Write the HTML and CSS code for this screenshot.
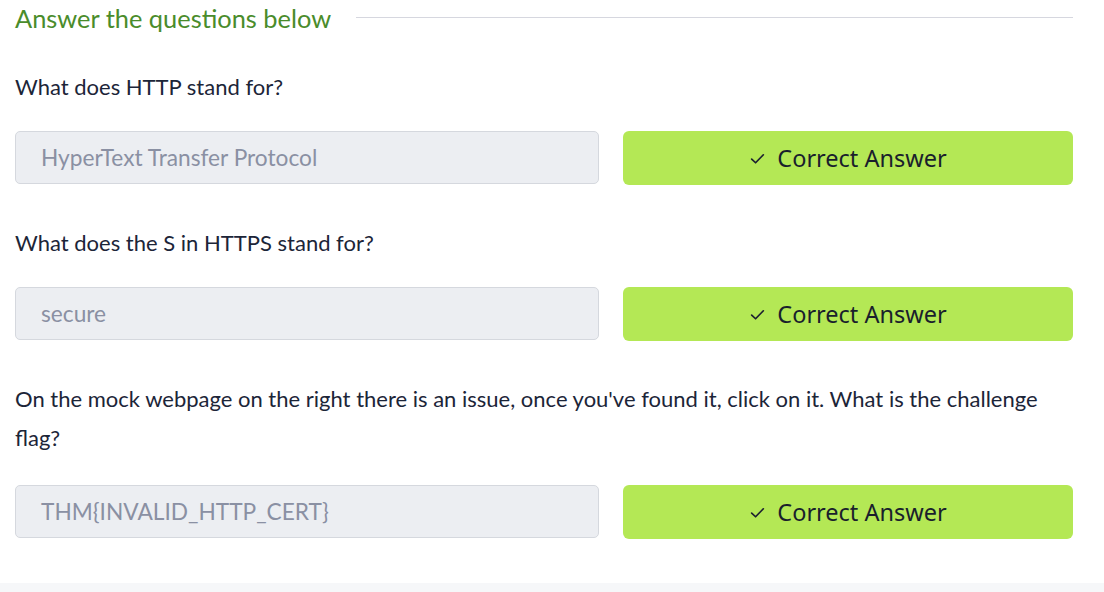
FILE: index.html
```html
<!DOCTYPE html>
<html>
<head>
<meta charset="utf-8">
<link rel="stylesheet" href="styles.css">
</head>
<body>
<main class="panel">
  <div class="heading">
    <h2 class="heading-title">Answer the questions below</h2>
    <span class="heading-rule"></span>
  </div>

  <section class="question">
    <p class="question-text">What does HTTP stand for?</p>
    <div class="answer-row">
      <div class="answer-input">HyperText Transfer Protocol</div>
      <button class="answer-btn"><svg class="check" viewBox="0 0 16 16" width="17" height="17"><path d="M2.5 8.5 L6.2 12 L13.5 4.5" fill="none" stroke="#1c2030" stroke-width="1.6" stroke-linecap="round" stroke-linejoin="round"/></svg>Correct Answer</button>
    </div>
  </section>

  <section class="question">
    <p class="question-text">What does the S in HTTPS stand for?</p>
    <div class="answer-row">
      <div class="answer-input">secure</div>
      <button class="answer-btn"><svg class="check" viewBox="0 0 16 16" width="17" height="17"><path d="M2.5 8.5 L6.2 12 L13.5 4.5" fill="none" stroke="#1c2030" stroke-width="1.6" stroke-linecap="round" stroke-linejoin="round"/></svg>Correct Answer</button>
    </div>
  </section>

  <section class="question question-long">
    <p class="question-text">On the mock webpage on the right there is an issue, once you've found it, click on it. What is the challenge flag?</p>
    <div class="answer-row">
      <div class="answer-input">THM{INVALID_HTTP_CERT}</div>
      <button class="answer-btn"><svg class="check" viewBox="0 0 16 16" width="17" height="17"><path d="M2.5 8.5 L6.2 12 L13.5 4.5" fill="none" stroke="#1c2030" stroke-width="1.6" stroke-linecap="round" stroke-linejoin="round"/></svg>Correct Answer</button>
    </div>
  </section>
</main>
<div class="footer-band"></div>
</body>
</html>
```

FILE: styles.css
```css
* { box-sizing: border-box; }
html, body { margin: 0; padding: 0; background: #ffffff; }
body {
  font-family: "Lato", "Noto Sans", sans-serif;
  color: #1c2538;
  width: 1104px;
  height: 592px;
  overflow: hidden;
  display: flex;
  flex-direction: column;
}
.panel {
  padding: 0 31px 0 15px;
  flex: 1;
}
.heading {
  display: flex;
  align-items: center;
  gap: 25px;
  height: 36px;
}
.heading-title {
  margin: 0;
  font-size: 25.4px;
  font-weight: 400;
  color: #4a8c2b;
  white-space: nowrap;
}
.heading-rule {
  flex: 1;
  height: 1px;
  background: #d6d7df;
  margin-top: -1px;
}
.question { margin-top: 31px; }
.question + .question { margin-top: 38px; }
.question-text {
  margin: 0 0 25px;
  font-size: 22px;
  line-height: 39px;
}
.question-long .question-text { margin-bottom: 28px; }
.answer-row {
  display: flex;
  gap: 24px;
}
.answer-input {
  width: 584px;
  height: 53px;
  background: #eceef2;
  border: 1px solid #d5d8de;
  border-radius: 5px;
  padding: 0 0 0 25px;
  display: flex;
  align-items: center;
  font-size: 22.7px;
  color: #8a90a3;
}
.answer-btn {
  flex: 1;
  height: 54px;
  background: #b4e855;
  border: none;
  border-radius: 6px;
  display: flex;
  align-items: center;
  justify-content: center;
  gap: 11px;
  font-family: "Noto Sans", sans-serif;
  font-size: 23.5px;
  color: #1a1f2c;
  padding: 0;
}
.check { flex: none; }
.footer-band {
  height: 9px;
  background: #f6f7f9;
}
```
